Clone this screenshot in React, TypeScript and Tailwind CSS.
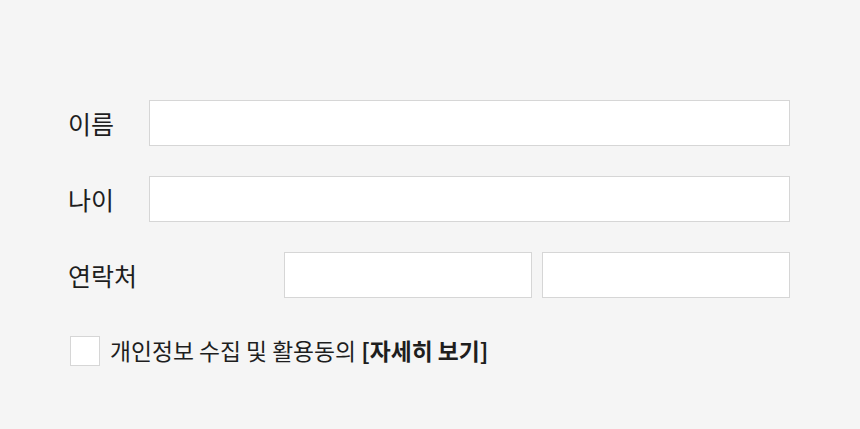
import React from "react";

export default function App() {
  const font = { fontFamily: '"Noto Sans CJK KR", "Noto Sans", sans-serif' };
  return (
    <div className="w-[860px] h-[429px] bg-[#f5f5f5] text-[#1e1e1e]" style={font}>
      <div className="pt-[100px] pl-[68px] pr-[70px] flex flex-col">
        <div className="flex items-center h-[46px]">
          <div className="w-[81px] text-[25px] leading-none">이름</div>
          <div className="flex-1 h-[46px] bg-white border border-[#d6d6d6]" />
        </div>
        <div className="flex items-center h-[46px] mt-[30px]">
          <div className="w-[81px] text-[25px] leading-none">나이</div>
          <div className="flex-1 h-[46px] bg-white border border-[#d6d6d6]" />
        </div>
        <div className="flex items-center h-[46px] mt-[30px]">
          <div className="w-[216px] text-[25px] leading-none">연락처</div>
          <div className="flex-1 flex gap-[10px]">
            <div className="flex-1 h-[46px] bg-white border border-[#d6d6d6]" />
            <div className="flex-1 h-[46px] bg-white border border-[#d6d6d6]" />
          </div>
        </div>
        <div className="flex items-center mt-[38px] pl-[2px]">
          <div className="w-[30px] h-[30px] bg-white border border-[#d6d6d6]" />
          <div className="ml-[10px] text-[22.8px] leading-none">
            개인정보 수집 및 활용동의 <span className="font-bold">[자세히 보기]</span>
          </div>
        </div>
      </div>
    </div>
  );
}
